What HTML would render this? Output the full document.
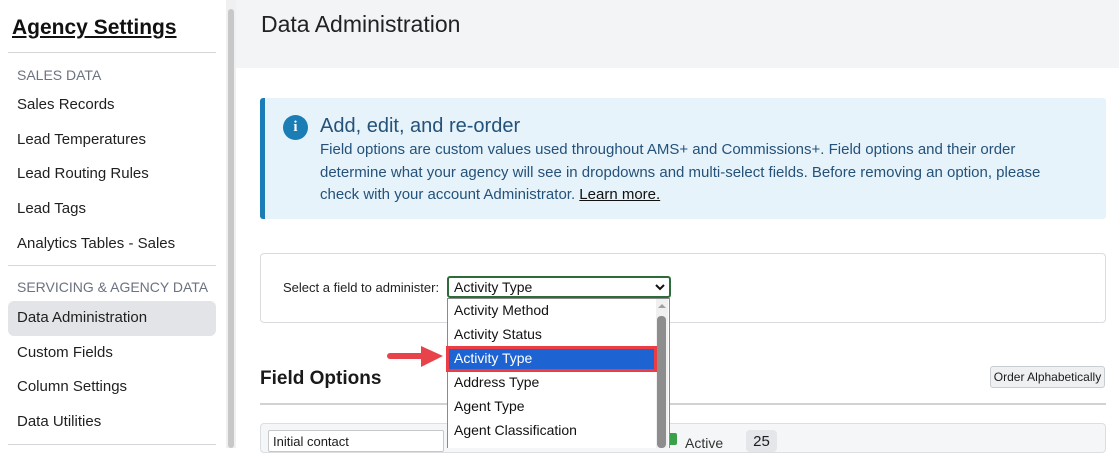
<!DOCTYPE html>
<html><head><meta charset="utf-8"><style>
*{margin:0;padding:0;box-sizing:border-box}
body{width:1119px;height:448px;overflow:hidden;background:#fff;font-family:"Liberation Sans",sans-serif;position:relative;color:#1c1c1c}
.a{position:absolute;white-space:nowrap}
.sb{font-size:15px;color:#1f1f1f}
.cap{font-size:14px;color:#6b7280}
.hr{position:absolute;height:1px;background:#d4d6da}
.dd{font-family:"Liberation Sans",sans-serif;font-size:14px;color:#111}
</style></head><body>
<div class="a" style="left:12px;top:16px;font-size:21px;font-weight:bold;text-decoration:underline;color:#111">Agency Settings</div>
<div class="hr" style="left:8px;top:52px;width:208px"></div>
<div class="a cap" style="left:17px;top:67px">SALES DATA</div>
<div class="a sb" style="left:17px;top:96px">Sales Records</div>
<div class="a sb" style="left:17px;top:131px">Lead Temperatures</div>
<div class="a sb" style="left:17px;top:165px">Lead Routing Rules</div>
<div class="a sb" style="left:17px;top:200px">Lead Tags</div>
<div class="a sb" style="left:17px;top:235px">Analytics Tables - Sales</div>
<div class="hr" style="left:8px;top:265px;width:208px"></div>
<div class="a cap" style="left:17px;top:279px">SERVICING &amp; AGENCY DATA</div>
<div class="a" style="left:8px;top:301px;width:208px;height:35px;background:#e2e4e7;border-radius:6px"></div>
<div class="a sb" style="left:17px;top:309px">Data Administration</div>
<div class="a sb" style="left:17px;top:344px">Custom Fields</div>
<div class="a sb" style="left:17px;top:378px">Column Settings</div>
<div class="a sb" style="left:17px;top:413px">Data Utilities</div>
<div class="hr" style="left:8px;top:444px;width:208px"></div>
<div class="a" style="left:226px;top:0;width:10px;height:448px;background:#f0f0f0"></div>
<div class="a" style="left:228px;top:9px;width:6px;height:439px;background:#c8c8c8;border-radius:3px"></div>
<div class="a" style="left:236px;top:0;width:883px;height:68px;background:#f3f4f6"></div>
<div class="a" style="left:261px;top:11px;font-size:23px;color:#222">Data Administration</div>
<div class="a" style="left:260px;top:98px;width:846px;height:121px;background:#e7f3fa;border-left:5px solid #1a7db6;border-radius:3px"></div>
<div class="a" style="left:283px;top:115px;width:25px;height:25px;border-radius:50%;background:#1a7db6;color:#fff;font-weight:bold;font-size:15px;text-align:center;line-height:25px;font-family:'Liberation Serif',serif">i</div>
<div class="a" style="left:320px;top:115px;font-size:20px;color:#24527a">Add, edit, and re-order</div>
<div class="a" style="left:320px;top:139px;font-size:15px;line-height:22.5px;color:#24527a;white-space:normal;width:750px">Field options are custom values used throughout AMS+ and Commissions+. Field options and their order determine what your agency will see in dropdowns and multi-select fields. Before removing an option, please check with your account Administrator. <span style="color:#111;text-decoration:underline">Learn more.</span></div>
<div class="a" style="left:260px;top:253px;width:846px;height:70px;border:1px solid #d9dbde;border-radius:4px"></div>
<div class="a" style="left:283px;top:280px;font-size:13px;color:#222">Select a field to administer:</div>
<div class="a" style="left:447px;top:276px;width:224px;height:22px;border:2px solid #2e6b3a;border-radius:3px;background:#fff"></div>
<div class="a dd" style="left:454px;top:279px">Activity Type</div>
<svg class="a" style="left:654px;top:282px" width="12" height="10"><path d="M2 3 L6 7 L10 3" stroke="#111" stroke-width="2" fill="none"/></svg>
<div class="a" style="left:260px;top:368px;font-size:19px;font-weight:bold;color:#1a1a1a">Field Options</div>
<div class="a" style="left:990px;top:366px;width:115px;height:22px;border:1px solid #c9ccd0;border-radius:3px;background:#eef0f2;font-size:12px;text-align:center;line-height:20px">Order Alphabetically</div>
<div class="a" style="left:260px;top:403px;width:846px;height:2px;background:#d0d2d5"></div>
<div class="a" style="left:260px;top:423px;width:846px;height:30px;background:#f5f6f7;border:1px solid #dcdee1;border-radius:4px"></div>
<div class="a" style="left:268px;top:430px;width:176px;height:22px;border:1px solid #c6c8cc;background:#fff;border-radius:2px;font-size:13px;padding:3px 4px">Initial contact</div>
<div class="a" style="left:666px;top:433px;width:11px;height:12px;background:#3aa04a;border-radius:2px"></div>
<div class="a" style="left:685px;top:435px;font-size:14px;color:#333">Active</div>
<div class="a" style="left:746px;top:430px;width:31px;height:22px;background:#e4e6e9;border-radius:4px;font-size:15px;text-align:center;line-height:24px">25</div>
<div class="a" style="left:447px;top:298px;width:223px;height:150px;background:#fff;border:1px solid #8a8a8a;border-bottom:none"></div>
<div class="a" style="left:656px;top:299px;width:12px;height:149px;background:#f0f0f0"></div>
<div class="a" style="left:657px;top:316px;width:9px;height:132px;background:#8d8d8d;border-radius:4px"></div>
<svg class="a" style="left:657px;top:302px" width="10" height="8"><path d="M1 6 L5 2 L9 6Z" fill="#a0a0a0"/></svg>
<div class="a dd" style="left:454px;top:302px">Activity Method</div>
<div class="a dd" style="left:454px;top:326px">Activity Status</div>
<div class="a" style="left:446px;top:346px;width:211px;height:26px;background:#1d63d2;border:3px solid #ec3d45"></div>
<div class="a dd" style="left:454px;top:350px;color:#fff">Activity Type</div>
<div class="a dd" style="left:454px;top:374px">Address Type</div>
<div class="a dd" style="left:454px;top:398px">Agent Type</div>
<div class="a dd" style="left:454px;top:422px">Agent Classification</div>
<svg class="a" style="left:385px;top:343px" width="62" height="28"><path d="M5 13 L40 13" stroke="#e8424a" stroke-width="6" stroke-linecap="round"/><path d="M36 3 L58 13 L36 24Z" fill="#e8424a"/></svg>
</body></html>
